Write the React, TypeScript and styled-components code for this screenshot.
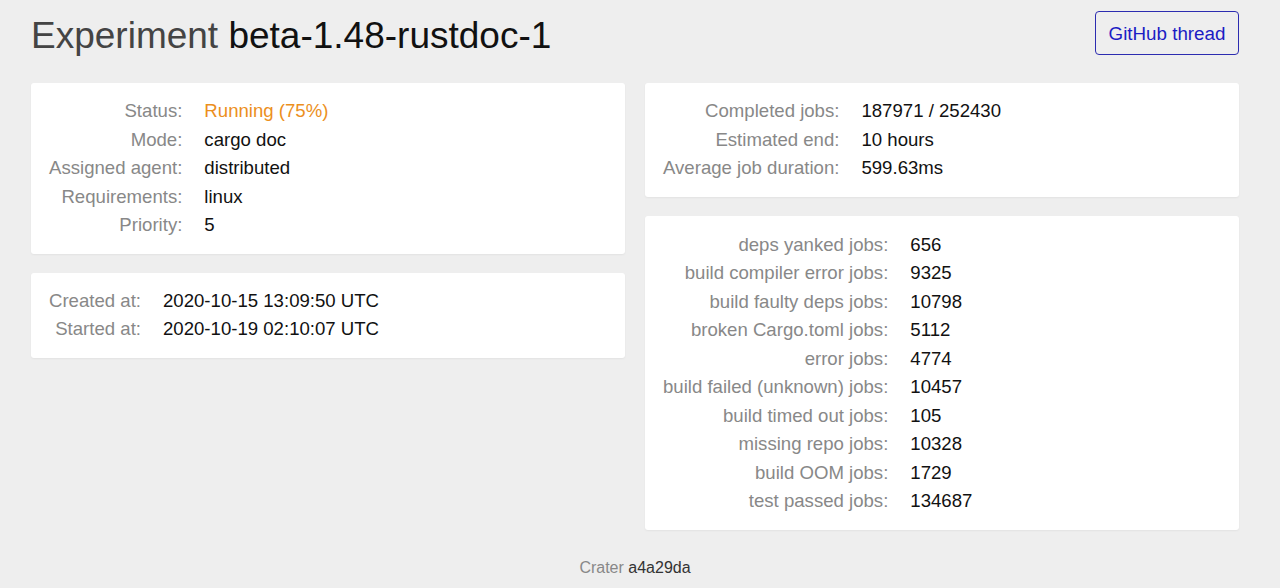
import styled, { createGlobalStyle } from "styled-components";

const GlobalStyle = createGlobalStyle`
	html, body {
		margin: 0;
		padding: 0;
		background: #eeeeee;
		font-family: "Liberation Sans", Arial, sans-serif;
	}
`;

const Page = styled.div`
	padding: 11px 41px 0 31px;
	height: 588px;
	box-sizing: border-box;
	display: flex;
	flex-direction: column;
`;

const Header = styled.div`
	display: flex;
	justify-content: space-between;
	align-items: flex-start;
	height: 72px;
`;

const Title = styled.h1`
	margin: 3px 0 0;
	font-size: 37px;
	font-weight: 400;
	line-height: 44px;
	color: #444;
`;

const Name = styled.span`
	color: #111;
`;

const ThreadButton = styled.a`
	display: block;
	box-sizing: border-box;
	width: 144px;
	height: 44px;
	line-height: 43px;
	text-align: center;
	border: 1.5px solid #2c2cb0;
	border-radius: 4px;
	color: #1c1cc4;
	font-size: 18.8px;
	text-decoration: none;
`;

const Columns = styled.div`
	display: grid;
	grid-template-columns: 1fr 1fr;
	column-gap: 20px;
	align-items: start;
`;

const Column = styled.div`
	display: flex;
	flex-direction: column;
	gap: 19px;
`;

const Card = styled.div<{ $pad?: string }>`
	background: #fff;
	border-radius: 3px;
	box-shadow: 0 1px 2px rgba(0, 0, 0, 0.05);
	padding: ${(p) => p.$pad ?? "14px 18px"};
`;

const Table = styled.div`
	display: grid;
	grid-template-columns: max-content 1fr;
	column-gap: 22px;
	font-size: 18.6px;
	line-height: 28.5px;
`;

const Label = styled.div`
	text-align: right;
	color: #888;
`;

const Value = styled.div<{ $accent?: boolean }>`
	color: ${(p) => (p.$accent ? "#ec8f1d" : "#111")};
`;

const Footer = styled.div`
	margin-top: auto;
	padding-bottom: 11px;
	text-align: center;
	font-size: 16px;
	color: #888;
`;

const Hash = styled.span`
	color: #333;
`;

type Row = [string, string, boolean?];

const info: Row[] = [
	["Status:", "Running (75%)", true],
	["Mode:", "cargo doc"],
	["Assigned agent:", "distributed"],
	["Requirements:", "linux"],
	["Priority:", "5"],
];

const dates: Row[] = [
	["Created at:", "2020-10-15 13:09:50 UTC"],
	["Started at:", "2020-10-19 02:10:07 UTC"],
];

const progress: Row[] = [
	["Completed jobs:", "187971 / 252430"],
	["Estimated end:", "10 hours"],
	["Average job duration:", "599.63ms"],
];

const results: Row[] = [
	["deps yanked jobs:", "656"],
	["build compiler error jobs:", "9325"],
	["build faulty deps jobs:", "10798"],
	["broken Cargo.toml jobs:", "5112"],
	["error jobs:", "4774"],
	["build failed (unknown) jobs:", "10457"],
	["build timed out jobs:", "105"],
	["missing repo jobs:", "10328"],
	["build OOM jobs:", "1729"],
	["test passed jobs:", "134687"],
];

const InfoCard = ({ rows, pad }: { rows: Row[]; pad?: string }) => (
	<Card $pad={pad}>
		<Table>
			{rows.flatMap(([label, value, accent]) => [
				<Label key={label + "-l"}>{label}</Label>,
				<Value key={label + "-v"} $accent={accent}>
					{value}
				</Value>,
			])}
		</Table>
	</Card>
);

const App = () => {
	return (
		<>
			<GlobalStyle />
			<Page>
				<Header>
					<Title>
						Experiment <Name>beta-1.48-rustdoc-1</Name>
					</Title>
					<ThreadButton href="#">GitHub thread</ThreadButton>
				</Header>
				<Columns>
					<Column>
						<InfoCard rows={info} />
						<InfoCard rows={dates} />
					</Column>
					<Column>
						<InfoCard rows={progress} />
						<InfoCard rows={results} pad="15px 18px 14px" />
					</Column>
				</Columns>
				<Footer>
					Crater <Hash>a4a29da</Hash>
				</Footer>
			</Page>
		</>
	);
};

export default App;
